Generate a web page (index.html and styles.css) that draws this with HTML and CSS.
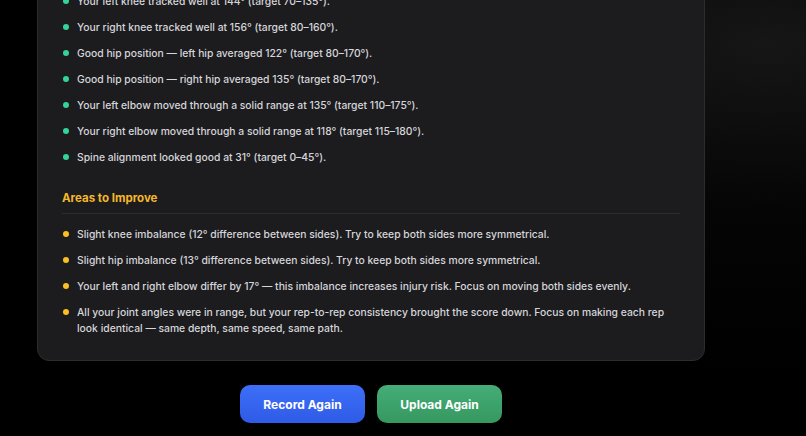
FILE: index.html
```html
<!DOCTYPE html>
<html>
<head>
<meta charset="utf-8">
<link rel="stylesheet" href="styles.css">
</head>
<body>
<div class="page">
  <div class="card">
    <ul class="list good">
      <li>Your left knee tracked well at 144° (target 70–135°).</li>
      <li>Your right knee tracked well at 156° (target 80–160°).</li>
      <li>Good hip position — left hip averaged 122° (target 80–170°).</li>
      <li>Good hip position — right hip averaged 135° (target 80–170°).</li>
      <li>Your left elbow moved through a solid range at 135° (target 110–175°).</li>
      <li>Your right elbow moved through a solid range at 118° (target 115–180°).</li>
      <li>Spine alignment looked good at 31° (target 0–45°).</li>
    </ul>
    <h3 class="section-title">Areas to Improve</h3>
    <ul class="list warn">
      <li>Slight knee imbalance (12° difference between sides). Try to keep both sides more symmetrical.</li>
      <li>Slight hip imbalance (13° difference between sides). Try to keep both sides more symmetrical.</li>
      <li>Your left and right elbow differ by 17° — this imbalance increases injury risk. Focus on moving both sides evenly.</li>
      <li>All your joint angles were in range, but your rep-to-rep consistency brought the score down. Focus on making each rep look identical — same depth, same speed, same path.</li>
    </ul>
  </div>
  <div class="actions">
    <button class="btn btn-blue">Record Again</button>
    <button class="btn btn-green">Upload Again</button>
  </div>
</div>
</body>
</html>
```

FILE: styles.css
```css
html, body {
  margin: 0;
  padding: 0;
  height: 100%;
  overflow: hidden;
}
body {
  background: radial-gradient(ellipse at 95% 10%, #161616 0%, #050505 30%, #000 60%);
  font-family: Inter, "Noto Sans", sans-serif;
  color: #d4d4d8;
}
.page {
  width: 668px;
  margin: -32px 0 0 37px;
  display: flex;
  flex-direction: column;
}
.card {
  background: #1c1c1f;
  border: 1px solid #2b2b30;
  border-radius: 12px;
  padding: 24px 24px 24px 24px;
}
.list {
  list-style: none;
  margin: 0;
  padding: 0;
  display: flex;
  flex-direction: column;
  gap: 10px;
}
.list li {
  position: relative;
  padding-left: 15px;
  font-size: 10.35px;
  line-height: 16px;
  font-weight: 500;
  color: #d6d6da;
}
.list li::before {
  content: "";
  position: absolute;
  left: 1px;
  top: 5px;
  width: 6px;
  height: 6px;
  border-radius: 50%;
}
.good li::before { background: #34d399; }
.warn li::before { background: #fbbf24; }
.section-title {
  margin: 24px 0 12px 0;
  padding-bottom: 6px;
  border-bottom: 1px solid #2c2c31;
  font-size: 11.5px;
  line-height: 18px;
  font-weight: 700;
  color: #f5b82a;
}
.actions {
  display: flex;
  justify-content: center;
  gap: 12px;
  margin-top: 24px;
}
.btn {
  width: 125px;
  height: 38px;
  border: none;
  border-radius: 10px;
  font-family: Inter, "Noto Sans", sans-serif;
  font-size: 12px;
  font-weight: 700;
  color: #fff;
}
.btn-blue {
  background: linear-gradient(180deg, #3d6ff8 0%, #2f5be6 100%);
}
.btn-green {
  background: linear-gradient(180deg, #45ad78 0%, #35985f 100%);
}
```
